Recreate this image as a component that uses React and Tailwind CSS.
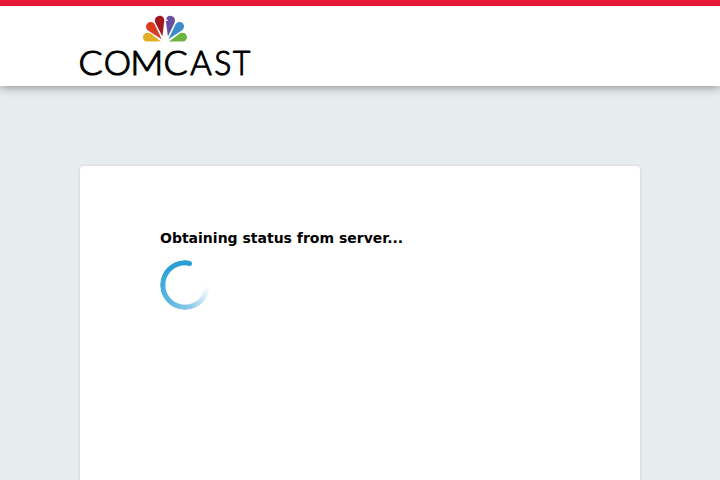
const petals = [
  { color: '#e3ae24', d: 'M18 25.7H4C1.4 25.7 0 23.8 0 21.6C0 18.8 2.2 17 4.8 17C6.6 17 7.7 17.8 9 18.8Z' },
  { color: '#dc3b22', d: 'M18.7 23.4L5.1 14.6C2.7 13 2.6 9.8 4.1 7.9C5.8 5.8 9.1 5.6 10.9 7.4C11.7 8.2 12.1 9.2 12.5 10.1Z' },
  { color: '#a2171d', d: 'M19.4 20.8L12.4 6.9C10.9 3.7 13.2 0 16.7 0C20 0 21.7 2.7 21.2 5.5Z' },
  { color: '#674d9f', d: 'M24.9 20.8L23.1 6.9L22.7 5.2H24.8C24.8 4.1 24.1 3.7 23.2 3.7C23.4 1.7 25 0 27.1 0C30.8 0 33 3.7 31.5 6.9Z' },
  { color: '#398dce', d: 'M25.4 23.4L31.8 10.1C32.7 8 33.7 6.1 36.5 6.1C39.6 6.1 41.1 8.4 41 10.8C40.9 12.7 40 13.9 38.7 14.7Z' },
  { color: '#6db33f', d: 'M26 25.7L35.4 18.7C36.6 17.8 37.9 17 39.5 17C42.2 17 44 18.9 44 21.4C44 24 42.3 25.7 39.8 25.7Z' },
];

// Each wordmark letter has its own offset and horizontal stretch.
const letters = [
  { char: 'C', x: -1.4, stretch: 1.07 },
  { char: 'O', x: 23.7, stretch: 1.03 },
  { char: 'M', x: 50.2, stretch: 1.09 },
  { char: 'C', x: 83.6, stretch: 1.07 },
  { char: 'A', x: 110.3, stretch: 0.98 },
  { char: 'S', x: 134.3, stretch: 0.95 },
  { char: 'T', x: 153, stretch: 0.89 },
];

function Logo() {
  return (
    <svg className="block h-[70px] w-[176px] overflow-visible" viewBox="0 0 176 70" role="img" aria-label="Comcast">
      <g transform="translate(63 0.8)">
        {petals.map((p) => (
          <path key={p.color} d={p.d} fill={p.color} />
        ))}
      </g>
      <g className="fill-black stroke-black stroke-[1.1px] font-['Lato',sans-serif] text-[33.5px] font-light [stroke-linejoin:round]">
        {letters.map((l) => (
          <text key={l.x} transform={`translate(${l.x} 60.4) scale(${l.stretch} 1)`}>
            {l.char}
          </text>
        ))}
      </g>
    </svg>
  );
}

function Spinner() {
  return (
    <div className="relative size-[50px]">
      <div className="size-full rounded-full bg-[conic-gradient(#2b9fd3_0deg,#2b9fd3_12deg,transparent_12deg,transparent_92deg,#d4ecf7_122deg,#8ccbe8_165deg,#6bbce1_205deg,#49aedb_260deg,#2b9fd3_320deg,#2b9fd3_360deg)] [mask-image:radial-gradient(circle,transparent_19px,black_20.3px,black_24.4px,transparent_25.3px)]" />
      <div className="absolute left-[27px] top-[0.7px] size-[5px] rounded-full bg-[#2b9fd3]" />
    </div>
  );
}

export default function App() {
  return (
    <div className="flex h-[480px] w-[720px] flex-col overflow-hidden bg-[#e7ecef]">
      <header className="h-[86px] shrink-0 border-t-[6px] border-[#e61937] bg-white px-20 pt-[9px] shadow-[0_0_10px_rgba(0,0,0,0.5)]">
        <Logo />
      </header>
      <main className="mx-20 mt-20 h-[400px] shrink-0 rounded-[4px] bg-white px-20 pt-16 shadow-[0_0_3px_rgba(0,0,0,0.15)]">
        <p className="font-['DejaVu_Sans',sans-serif] text-[14px] leading-4 font-bold text-black">
          Obtaining status from server...
        </p>
        <div className="pt-[14px]">
          <Spinner />
        </div>
      </main>
    </div>
  );
}
